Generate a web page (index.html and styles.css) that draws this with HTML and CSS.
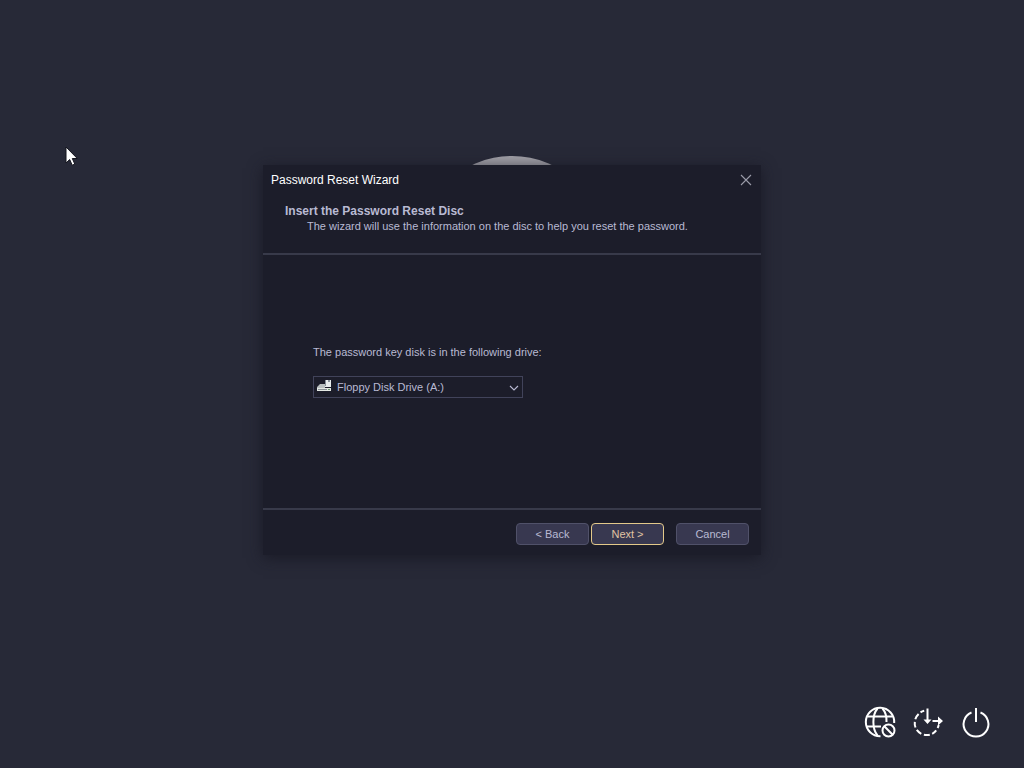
FILE: index.html
```html
<!DOCTYPE html>
<html lang="en">
<head>
<meta charset="utf-8">
<title>Password Reset Wizard</title>
<link rel="stylesheet" href="styles.css">
</head>
<body>
<main class="screen">
  <div class="avatar"></div>
  <form class="dialog" role="dialog" aria-labelledby="dialog-title">
    <header class="titlebar">
      <h1 class="title" id="dialog-title">Password Reset Wizard</h1>
      <button class="close" type="button" aria-label="Close">
        <svg width="12" height="12" viewBox="0 0 12 12"><path d="M1 1l10 10M11 1L1 11" stroke="currentColor" stroke-width="1.1" fill="none"/></svg>
      </button>
    </header>
    <div class="heading">
      <h2 class="step">Insert the Password Reset Disc</h2>
      <p class="hint">The wizard will use the information on the disc to help you reset the password.</p>
    </div>
    <div class="content">
      <label class="label" for="drive">The password key disk is in the following drive:</label>
      <div class="picker">
        <select class="drive" id="drive"><option>Floppy Disk Drive (A:)</option></select>
        <svg class="drive-icon" width="16" height="14" viewBox="0 0 16 14">
          <path d="M4 5h5v4h6v1H1V8z" fill="#b9bfc0"/>
          <path d="M1 9h14v3H1z" fill="#e4e9e4"/>
          <path d="M2 10.5h9" stroke="#8c9398"/>
          <path d="M12 10.5h2" stroke="#6c9a70"/>
          <path d="M9 1h6v7H9z" fill="#e7ebec"/>
          <path d="M9 1h1v6H9zM12 1h2v2h-2z" fill="#879099"/>
        </svg>
        <svg class="chevron" width="10" height="6" viewBox="0 0 10 6"><path d="M1 1l4 4 4-4" stroke="currentColor" stroke-width="1.1" fill="none"/></svg>
      </div>
    </div>
    <footer class="actions">
      <div class="pair">
        <button class="button" type="button">&lt; Back</button>
        <button class="button primary" type="button">Next &gt;</button>
      </div>
      <button class="button" type="button">Cancel</button>
    </footer>
  </form>
  <nav class="tray" aria-label="System">
    <button class="tray-button" type="button" aria-label="Network">
      <svg width="32" height="32" viewBox="0 0 32 32" fill="none" stroke="currentColor" stroke-width="2">
        <path d="M16.500 30.200A14.200 14.200 0 1 1 30.200 17"/>
        <path d="M13.500 29.500C8 23 8 9 13.500 2.500M18.500 2.500C21.500 6 22.700 11 22.500 16"/>
        <path d="M3.500 10.500h25M3 20.500h14"/>
        <circle cx="24.500" cy="24.500" r="6"/>
        <path d="M20.300 20.300l8.400 8.400"/>
      </svg>
    </button>
    <button class="tray-button" type="button" aria-label="Ease of access">
      <svg width="32" height="32" viewBox="0 0 32 32" fill="none" stroke="currentColor" stroke-width="2">
        <path d="M12.200 4.800A12.300 12.300 0 0 0 8.500 6.400M6.600 8A12.300 12.300 0 0 0 3.300 13.300M2.800 15.800A12.300 12.300 0 0 0 3.500 21.500M4.800 23.900A12.300 12.300 0 0 0 9.300 27.800M11.900 28.700A12.300 12.300 0 0 0 17.800 28.700M20.200 27.800A12.300 12.300 0 0 0 24.200 24.300M25.600 22A12.300 12.300 0 0 0 26.700 19"/>
        <path d="M15.500 2.500v12M20.500 15h6"/>
        <path d="M11.500 13.500h8l-4 4.500zM26 10.500v9l5-4.500z" fill="currentColor" stroke="none"/>
      </svg>
    </button>
    <button class="tray-button" type="button" aria-label="Power">
      <svg width="32" height="32" viewBox="0 0 32 32" fill="none" stroke="currentColor" stroke-width="2">
        <path d="M11.500 6.500A12.400 12.400 0 1 0 20.500 6.500M16 2v14"/>
      </svg>
    </button>
  </nav>
  <svg class="cursor" width="13" height="20" viewBox="0 0 13 20"><path d="M1 1v16l3.700-3.500 2.500 5.700 2.600-1.100-2.500-5.600h5z" fill="#fff" stroke="#15161f"/></svg>
</main>
</body>
</html>
```
FILE: styles.css
```css
* { box-sizing: border-box; }

body {
  margin: 0;
  background: #272937;
  color: #b9bad3;
  font: 11px/15px "Liberation Sans", Arial, sans-serif;
}

h1, h2, p { margin: 0; }

button { font: inherit; padding: 0; }

.screen {
  position: relative;
  min-height: 100vh;
  display: flex;
  flex-direction: column;
  align-items: center;
  padding: 165px 32px 30px;
}

.avatar {
  position: absolute;
  top: 156px;
  left: calc(50% - 94px);
  width: 188px;
  height: 188px;
  border-radius: 50%;
  background: #a09fa6;
}

.dialog {
  position: relative;
  width: 100%;
  max-width: 498px;
  background: #1c1d2a;
  box-shadow: 0 3px 14px rgba(22, 23, 34, 0.8);
}

.titlebar {
  display: flex;
  justify-content: space-between;
  align-items: center;
  height: 30px;
  padding: 0 8px;
}

.title {
  color: #fff;
  font-size: 12px;
  font-weight: 400;
}

.close {
  display: grid;
  place-items: center;
  width: 14px;
  height: 14px;
  border: 0;
  background: none;
  color: #9b9ca9;
}

.heading {
  padding: 9px 22px 19px;
  border-bottom: 2px solid #383a4a;
}

.step {
  font-size: 12px;
  line-height: 15px;
}

.hint { padding-left: 22px; }

.content {
  padding: 90px 50px 110px;
  border-bottom: 2px solid #383a4a;
}

.label { display: block; }

.picker {
  position: relative;
  width: 210px;
  margin-top: 16px;
}

.drive {
  display: block;
  width: 100%;
  height: 22px;
  padding: 0 20px 0 23px;
  appearance: none;
  border: 1px solid #41435a;
  border-radius: 0;
  background: #1c1d2a;
  color: inherit;
  font: inherit;
}

.drive-icon {
  position: absolute;
  left: 3px;
  top: 3px;
  pointer-events: none;
}

.chevron {
  position: absolute;
  right: 4px;
  top: 9px;
  pointer-events: none;
}

.actions {
  display: flex;
  justify-content: flex-end;
  gap: 12px;
  padding: 13px 12px 10px;
}

.pair {
  display: flex;
  gap: 2px;
}

.button {
  width: 73px;
  height: 22px;
  border: 1px solid #505169;
  border-radius: 4px;
  background: #383850;
  color: inherit;
}

.primary {
  border-color: #e3c98a;
  color: #e0c3a2;
}

.tray {
  display: flex;
  gap: 16px;
  margin-top: auto;
  align-self: flex-end;
}

.tray-button {
  width: 32px;
  height: 32px;
  border: 0;
  background: none;
  color: #fff;
}

.tray-button svg { display: block; }

.cursor {
  position: absolute;
  left: 65px;
  top: 146px;
}
```
